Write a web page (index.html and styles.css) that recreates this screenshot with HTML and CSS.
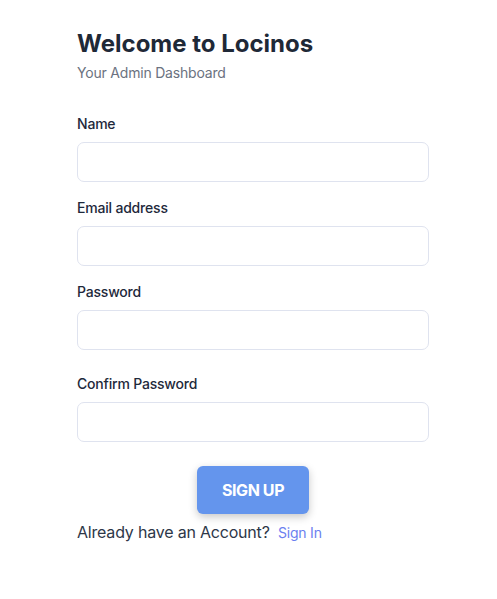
FILE: index.html
```html
<!DOCTYPE html>
<html lang="en">
<head>
<meta charset="utf-8">
<title>Sign up</title>
<link rel="stylesheet" href="styles.css">
</head>
<body>
<main class="page">
  <header class="head">
    <h1 class="title">Welcome to Locinos</h1>
    <p class="subtitle">Your Admin Dashboard</p>
  </header>
  <form class="form">
    <div class="field">
      <label class="label" for="name">Name</label>
      <input class="input" id="name" type="text">
    </div>
    <div class="field">
      <label class="label" for="email">Email address</label>
      <input class="input" id="email" type="email">
    </div>
    <div class="field">
      <label class="label" for="pw">Password</label>
      <input class="input" id="pw" type="password">
    </div>
    <div class="field field-confirm">
      <label class="label" for="pw2">Confirm Password</label>
      <input class="input" id="pw2" type="password">
    </div>
    <div class="actions">
      <button class="btn" type="button">SIGN UP</button>
    </div>
    <p class="foot">Already have an Account? <a class="link" href="#">Sign In</a></p>
  </form>
</main>
</body>
</html>
```

FILE: styles.css
```css
* { box-sizing: border-box; }
html, body { margin: 0; padding: 0; background: #ffffff; }
body {
  font-family: Inter, "Open Sans", "Liberation Sans", sans-serif;
  color: #1e293b;
}
.page {
  width: 352px;
  margin-left: 77px;
  padding-top: 28px;
}
.head { margin-bottom: 31px; }
.title {
  margin: 0;
  font-size: 24px;
  line-height: 32px;
  font-weight: 700;
  letter-spacing: 0;
  color: #1f2937;
}
.subtitle {
  margin: 3px 0 0;
  font-size: 14px;
  line-height: 20px;
  color: #6b7280;
  letter-spacing: -0.2px;
}
.form { display: flex; flex-direction: column; }
.field { display: flex; flex-direction: column; margin-bottom: 16px; }
.field-confirm { margin-top: 8px; margin-bottom: 24px; }
.label {
  font-size: 14px;
  line-height: 20px;
  font-weight: 500;
  color: #1e293b;
  margin-bottom: 8px;
  letter-spacing: -0.2px;
}
.input {
  height: 40px;
  width: 100%;
  border: 1px solid #dfe3ef;
  border-radius: 7px;
  background: #fff;
  font: inherit;
}
.actions { display: flex; justify-content: center; }
.btn {
  width: 112px;
  height: 48px;
  border: 0;
  border-radius: 6px;
  background: #6495ed;
  color: #ffffff;
  font-family: inherit;
  font-size: 16px;
  font-weight: 700;
  letter-spacing: -0.4px;
  box-shadow: 0 3px 8px rgba(0, 0, 0, 0.22);
}
.foot {
  margin: 7px 0 0;
  font-size: 16px;
  line-height: 22px;
  color: #2d3748;
  letter-spacing: -0.2px;
}
.link {
  margin-left: 4px;
  font-size: 14px;
  color: #6b7ff0;
  text-decoration: none;
}
```
